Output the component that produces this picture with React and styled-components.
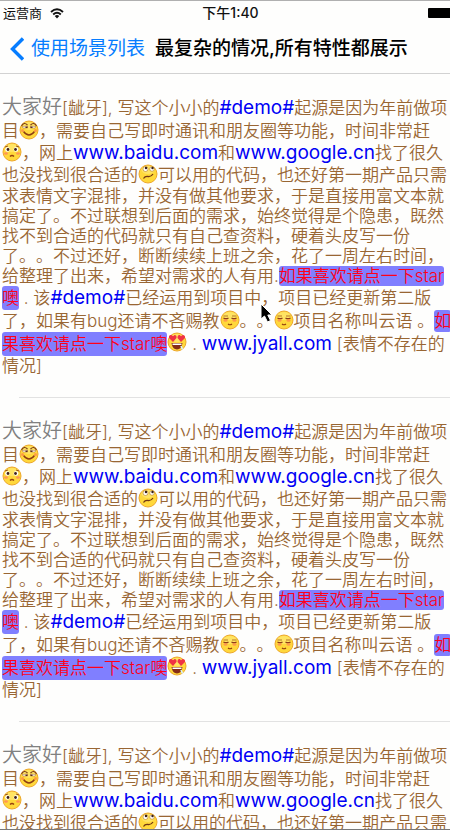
import React from 'react';
import styled, { createGlobalStyle } from 'styled-components';

const GlobalStyle = createGlobalStyle`
  *, *::before, *::after { box-sizing: border-box; }
  body {
    margin: 0;
    background: #fefefd;
    font-family: Inter, "Noto Sans CJK SC", sans-serif;
    text-spacing-trim: space-all;
  }
`;

const Screen = styled.div`
  display: flex;
  flex-direction: column;
  height: 100vh;
  overflow: hidden;
  border-top: 1px solid #b0b0b0;
  border-bottom: 1px solid #777;
`;

const Header = styled.header`
  flex: none;
  border-bottom: 1px solid #d2d2d2;
`;

const StatusBar = styled.div`
  display: grid;
  grid-template-columns: 1fr auto 1fr;
  align-items: center;
  height: 24px;
  padding-left: 3px;
  font-size: 13px;
  line-height: 20px;
  color: #111;
`;

const Carrier = styled.span`
  display: flex;
  align-items: center;
  gap: 8px;
`;

const Clock = styled.time`
  padding-left: 8px;
  font-size: 14px;
  font-weight: 500;
`;

const Battery = styled.span`
  justify-self: end;
  width: 22px;
  height: 10px;
  border-radius: 1px 0 0 1px;
  background: #000;
`;

const NavBar = styled.nav`
  display: flex;
  align-items: center;
  gap: 10px;
  height: 48px;
  padding-left: 10px;
  font-size: 19px;
  line-height: 28px;
  white-space: nowrap;
`;

const BackButton = styled.button`
  display: flex;
  align-items: center;
  gap: 7px;
  padding: 0;
  border: 0;
  background: none;
  color: #067dff;
  font: inherit;
`;

const Title = styled.h1`
  margin: 0;
  font-size: inherit;
  font-weight: 500;
  color: #000;
`;

const Feed = styled.main`
  position: relative;
  flex: 1;
  min-height: 0;
  overflow: hidden;
`;

const Post = styled.article`
  padding: 22px 0 21px 2px;
`;

const Divider = styled.hr`
  height: 1px;
  margin: 0 0 0 19px;
  border: 0;
  background: #e2e2e2;
`;

const Line = styled.p`
  height: ${(p) => p.$height}px;
  margin: 0;
  font-size: 17px;
  font-weight: 350;
  line-height: ${(p) => p.$height}px;
  color: #996633;
  white-space: pre;
`;

const Greeting = styled.span`
  font-size: 20px;
  line-height: 20px;
  color: #808080;
`;

const TextLink = styled.a`
  font-size: 19px;
  font-weight: 400;
  line-height: 20px;
  color: #0000f5;
  text-decoration: none;
`;

const Highlight = styled.a`
  display: inline-block;
  height: 100%;
  vertical-align: top;
  border-radius: 3px;
  background: #807fff;
  color: #ff0019;
  text-decoration: none;
`;

const Face = styled.svg`
  width: 20px;
  height: 20px;
  vertical-align: top;
`;

const Pointer = styled.svg`
  position: absolute;
  top: 229px;
  left: 260px;
  width: 13px;
  height: 20px;
`;

const faces = {
  grin: (
    <>
      <path d="M2.500 6 Q5 1.500 8.500 5 M11.500 5 Q15 1.500 17.500 6" fill="none" stroke="#7b3b18" strokeWidth="1.100" />
      <path d="M3 6.500 L8.500 6 V8 H4 Z M11.500 6 L17 6.500 L16 8 H11.500 Z" fill="#fff" stroke="#a3602a" strokeWidth=".5" />
      <path d="M6.500 6.500 H8.500 V8 H6.500 Z M11.500 6.500 H13.500 V8 H11.500 Z" fill="#5d2d16" />
      <path d="M4.500 11.500 Q10 18.500 15.500 11.500" fill="none" stroke="#8c3c13" strokeWidth="1.300" />
      <circle cx="3.500" cy="10.500" r="1.500" fill="#ff9b45" />
      <circle cx="16.500" cy="10.500" r="1.500" fill="#ff9b45" />
    </>
  ),
  sad: (
    <>
      <circle cx="5.500" cy="7.500" r="2.300" fill="#fff" />
      <circle cx="14" cy="7.500" r="2.300" fill="#fff" />
      <circle cx="6" cy="7.500" r="1.400" fill="#402117" />
      <circle cx="13.500" cy="7.500" r="1.400" fill="#402117" />
      <path d="M3 5 L6 4 M14 4 L17 5" stroke="#9b551c" />
      <path d="M8 14.500 Q10 12.500 12 14.500" fill="none" stroke="#98420f" strokeWidth="1.400" />
      <ellipse cx="4" cy="11.500" rx="2" ry="1.300" fill="#ff9654" />
      <ellipse cx="16" cy="11.500" rx="2" ry="1.300" fill="#ff9654" />
    </>
  ),
  doubt: (
    <>
      <circle cx="7.500" cy="5" r="2.500" fill="#fff" stroke="#b47921" strokeWidth=".6" />
      <circle cx="14" cy="5" r="2.300" fill="#fff" stroke="#b47921" strokeWidth=".6" />
      <circle cx="8" cy="4" r="1.200" fill="#371f14" />
      <circle cx="14.500" cy="4" r="1.200" fill="#371f14" />
      <path d="M5.500 14.500 Q7 12 10 12.500 T15 10" fill="none" stroke="#733813" strokeWidth="1.300" />
    </>
  ),
  calm: (
    <>
      <path d="M3.500 6 L8 6 M12 6 L16.500 6" stroke="#a45a20" strokeWidth=".8" />
      <path d="M3.500 8 Q6 9.500 8.500 8 M11.500 8 Q14 9.500 16.500 8" fill="none" stroke="#8f3e19" strokeWidth="1.400" />
      <ellipse cx="5.500" cy="10.500" rx="2" ry="1.200" fill="#ff9a4d" />
      <ellipse cx="14.500" cy="10.500" rx="2" ry="1.200" fill="#ff9a4d" />
      <path d="M8 14 Q10 15.500 12 14" fill="none" stroke="#98420f" strokeWidth="1.200" />
    </>
  ),
  love: (
    <>
      <path d="M6 10 L2 6 Q1.500 2.500 4.500 3 L6 4.200 L7.500 3 Q10 3 9.500 6 Z" fill="#ef3345" />
      <path d="M14 10 L10.500 6 Q10.500 2.500 12.800 3 L14 4.200 L15.500 3 Q18.500 3 18 6 Z" fill="#ef3345" />
      <path d="M4.500 11 H15.500 Q14.500 17.500 10 17.500 T4.500 11" fill="#862d16" />
      <path d="M5.500 11.500 H14.500 V13 H5.500 Z" fill="#fff" />
      <path d="M14 14 L15.500 17.500" stroke="#d7f2ff" strokeWidth="1.600" />
    </>
  ),
};

function Emoji({ name, label }) {
  return (
    <Face viewBox="0 0 20 20" role="img" aria-label={label}>
      <circle cx="10" cy="10" r="9" fill="#ffd83b" stroke="#eda82c" />
      <ellipse cx="10" cy="6" rx="6.500" ry="4" fill="#ffe463" />
      {faces[name]}
    </Face>
  );
}

function PostBody() {
  return (
    <Post>
      <Line $height={24}><Greeting>大家好</Greeting>[龇牙], 写这个小小的<TextLink href="#demo">#demo#</TextLink>起源是因为年前做项</Line>
      <Line $height={22}>目<Emoji name="grin" label="嘻嘻" />，需要自己写即时通讯和朋友圈等功能，时间非常赶</Line>
      <Line $height={22}><Emoji name="sad" label="委屈" />，网上<TextLink href="#baidu">www.baidu.com</TextLink>和<TextLink href="#google">www.google.cn</TextLink>找了很久</Line>
      <Line $height={22}>也没找到很合适的<Emoji name="doubt" label="疑惑" />可以用的代码，也还好第一期产品只需</Line>
      <Line $height={20}>求表情文字混排，并没有做其他要求，于是直接用富文本就</Line>
      <Line $height={20}>搞定了。不过联想到后面的需求，始终觉得是个隐患，既然</Line>
      <Line $height={20}>找不到合适的代码就只有自己查资料，硬着头皮写一份</Line>
      <Line $height={20}>了。。不过还好，断断续续上班之余，花了一周左右时间，</Line>
      <Line $height={20}>给整理了出来，希望对需求的人有用.<Highlight href="#star">如果喜欢请点一下star</Highlight></Line>
      <Line $height={24}><Highlight href="#star">噢</Highlight> . 该<TextLink href="#demo">#demo#</TextLink>已经运用到项目中，项目已经更新第二版</Line>
      <Line $height={22}>了，如果有bug还请不吝赐教<Emoji name="calm" label="安静" />。。<Emoji name="calm" label="安静" />项目名称叫云语 。<Highlight href="#star">如</Highlight></Line>
      <Line $height={24}><Highlight href="#star">果喜欢请点一下star噢</Highlight><Emoji name="love" label="喜欢" /> . <TextLink href="#jyall">www.jyall.com</TextLink> [表情不存在的</Line>
      <Line $height={20}>情况]</Line>
    </Post>
  );
}

export default function App() {
  return (
    <>
      <GlobalStyle />
      <Screen>
        <Header>
          <StatusBar>
            <Carrier>
              运营商
              <svg width="14" height="11" viewBox="0 0 14 11" aria-hidden="true">
                <path d="M1 4 Q7 -1.500 13 4 M3.200 6.500 Q7 3 10.800 6.500" fill="none" stroke="#111" strokeWidth="1.900" />
                <path d="M4.700 8 Q7 6 9.300 8 L7 10.500 Z" fill="#111" />
              </svg>
            </Carrier>
            <Clock>下午1:40</Clock>
            <Battery />
          </StatusBar>
          <NavBar>
            <BackButton type="button">
              <svg width="14" height="24" viewBox="0 0 14 24" aria-hidden="true">
                <path d="M13 1.500 L2.500 12 L13 22.500" fill="none" stroke="#067dff" strokeWidth="3.400" />
              </svg>
              使用场景列表
            </BackButton>
            <Title>最复杂的情况,所有特性都展示</Title>
          </NavBar>
        </Header>
        <Feed>
          <PostBody />
          <Divider />
          <PostBody />
          <Divider />
          <PostBody />
          <Pointer viewBox="0 0 13 20" aria-hidden="true">
            <path d="M1 1 V16 L4.500 13 L7.500 19 L10.500 17.500 L7.800 12 H12 Z" fill="#000" stroke="#fff" />
          </Pointer>
        </Feed>
      </Screen>
    </>
  );
}
